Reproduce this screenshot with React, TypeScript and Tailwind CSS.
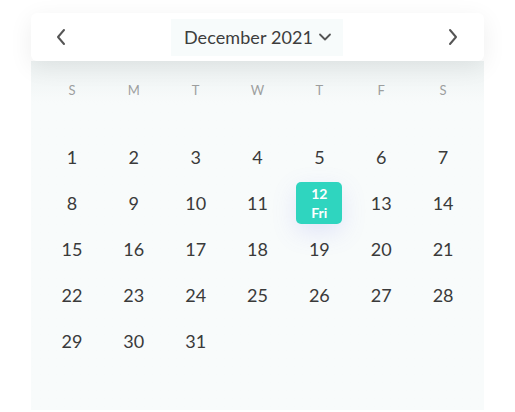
import React from "react";

const weekdays = ["S", "M", "T", "W", "T", "F", "S"];

function Chevron({ dir }: { dir: "left" | "right" | "down" }) {
  if (dir === "down") {
    return (
      <svg width="14" height="14" viewBox="0 0 14 14" fill="none">
        <path d="M2 4.5 L7 9.5 L12 4.5" stroke="#555" strokeWidth="1.8" strokeLinecap="round" strokeLinejoin="round" />
      </svg>
    );
  }
  return (
    <svg width="12" height="18" viewBox="0 0 12 18" fill="none">
      <path
        d={dir === "left" ? "M9 2 L3 9 L9 16" : "M3 2 L9 9 L3 16"}
        stroke="#555"
        strokeWidth="2"
        strokeLinecap="round"
        strokeLinejoin="round"
      />
    </svg>
  );
}

export default function App() {
  const rows: (number | null)[][] = [];
  for (let r = 0; r < 5; r++) {
    const row: (number | null)[] = [];
    for (let c = 0; c < 7; c++) {
      const d = r * 7 + c + 1;
      row.push(d <= 31 ? d : null);
    }
    rows.push(row);
  }

  return (
    <div
      className="w-[515px] h-[412px] bg-white pt-[13px] px-[31px] overflow-hidden"
      style={{ fontFamily: "Lato, 'Noto Sans', sans-serif" }}
    >
      <div className="relative z-10 h-[48px] bg-white rounded-md shadow-[0_6px_24px_rgba(0,0,0,0.07)] flex items-center justify-between pl-[24px] pr-[25px]">
        <Chevron dir="left" />
        <div className="h-[37px] w-[172px] bg-[#f7fbfb] flex items-center justify-center gap-[5px] pl-[2px]">
          <span className="text-[18px] text-[#3d3d3d] tracking-[0.1px]">December 2021</span>
          <Chevron dir="down" />
        </div>
        <Chevron dir="right" />
      </div>
      <div className="h-[349px] bg-gradient-to-b from-[#edf2f2] via-[#f8fbfb] via-[12%] to-[#f8fbfb] px-[10px] pt-[14px]">
        <div className="grid grid-cols-7 h-[32px] items-center">
          {weekdays.map((w, i) => (
            <div key={i} className="text-center text-[13px] text-[#9d9f9f] font-normal">
              {w}
            </div>
          ))}
        </div>
        <div className="mt-[27px]">
          {rows.map((row, r) => (
            <div key={r} className="grid grid-cols-7 h-[46px] items-center">
              {row.map((d, c) => (
                <div key={c} className="flex items-center justify-center h-full">
                  {d === 12 ? (
                    <div className="w-[46px] h-[42px] rounded-[5px] bg-[#2fd5bf] flex flex-col items-center justify-center text-white font-bold text-[14px] leading-[19px] shadow-[0_8px_24px_rgba(110,120,240,0.17)]">
                      <span>12</span>
                      <span>Fri</span>
                    </div>
                  ) : d ? (
                    <span className="text-[18px] text-[#3a3a3a]">{d}</span>
                  ) : null}
                </div>
              ))}
            </div>
          ))}
        </div>
      </div>
    </div>
  );
}
